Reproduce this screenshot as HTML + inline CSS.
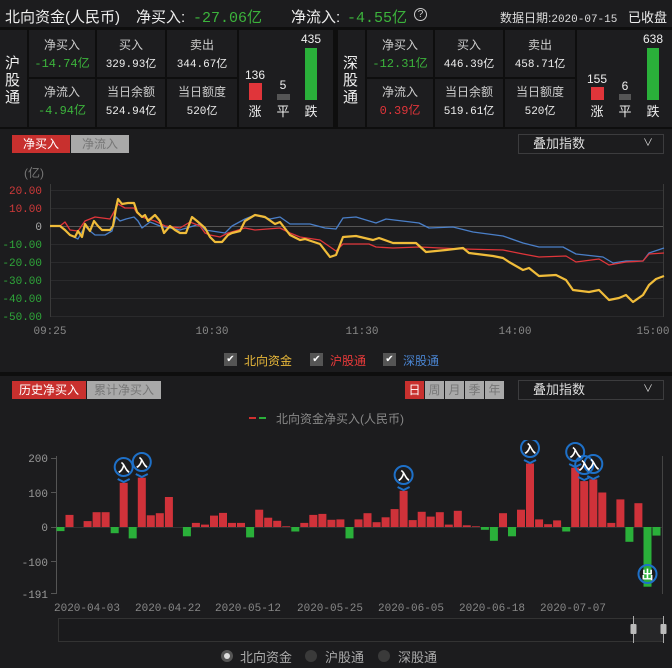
<!DOCTYPE html>
<html><head><meta charset="utf-8">
<style>
*{margin:0;padding:0;box-sizing:border-box}
body{width:672px;height:668px;background:#1c1c1e;font-family:"Liberation Sans","Noto Sans CJK SC",sans-serif;color:#ddd;position:relative;overflow:hidden}
.a{position:absolute;white-space:nowrap}
.c{position:absolute;text-align:center;white-space:nowrap}
.g{color:#3cb43c}.r{color:#e0353a}
.m{font-family:"Liberation Mono","Noto Sans CJK SC",monospace}
.v{font-size:11px}
</style></head><body>
<div class="a" style="left:0;top:0;width:672px;height:29px;background:#1c1c1e;border-bottom:2px solid #0e0e0e"></div>
<div class="a" style="left:5px;top:6px;font-size:15px;color:#eee">北向资金(人民币)</div>
<div class="a" style="left:136px;top:6px;font-size:15px;color:#eee">净买入:</div>
<div class="a g m" style="left:193px;top:6px;font-size:15px">-27.06亿</div>
<div class="a" style="left:291px;top:6px;font-size:15px;color:#eee">净流入:</div>
<div class="a g m" style="left:347px;top:6px;font-size:15px">-4.55亿</div>
<div class="a" style="left:414px;top:8px;width:13px;height:13px;border:1px solid #ccc;border-radius:50%;font-size:10px;text-align:center;line-height:11px;color:#ccc">?</div>
<div class="a" style="left:500px;top:9px;font-size:12px;color:#ddd">数据日期:<span class="m" style="font-size:11px">2020-07-15</span></div>
<div class="a" style="left:628px;top:7px;font-size:13px;color:#eee">已收盘</div>

<div class="a" style="left:0;top:29px;width:672px;height:100px;background:#0e0e0e"></div>
<svg class="a" style="left:0;top:29px" width="672" height="100">
<g fill="#1d1d1f">
<rect x="0" y="1" width="27" height="97"/>
<rect x="29" y="1" width="66" height="47"/><rect x="97" y="1" width="68" height="47"/><rect x="167" y="1" width="70" height="47"/>
<rect x="29" y="50" width="66" height="48"/><rect x="97" y="50" width="68" height="48"/><rect x="167" y="50" width="70" height="48"/>
<rect x="239" y="1" width="94" height="97"/>
<rect x="338" y="1" width="27" height="97"/>
<rect x="367" y="1" width="66" height="47"/><rect x="435" y="1" width="68" height="47"/><rect x="505" y="1" width="70" height="47"/>
<rect x="367" y="50" width="66" height="48"/><rect x="435" y="50" width="68" height="48"/><rect x="505" y="50" width="70" height="48"/>
<rect x="577" y="1" width="95" height="97"/>
</g>
<rect x="249" y="54" width="13" height="17" fill="#e0353a"/>
<rect x="277" y="65" width="13" height="6" fill="#555"/>
<rect x="305" y="19" width="12" height="52" fill="#2ab03a"/>
<rect x="591" y="58" width="13" height="13" fill="#e0353a"/>
<rect x="619" y="65" width="12" height="6" fill="#555"/>
<rect x="647" y="19" width="12" height="52" fill="#2ab03a"/>
</svg>
<div class="a" style="left:5px;top:55px;width:16px;font-size:15px;line-height:17px;color:#eee;white-space:normal">沪股通</div>
<div class="a" style="left:343px;top:55px;width:16px;font-size:15px;line-height:17px;color:#eee;white-space:normal">深股通</div>
<div style="font-size:12px">
<div class="c" style="left:29px;width:66px;top:36px;color:#ccc">净买入</div>
<div class="c g m" style="left:29px;width:66px;top:54px;font-size:12px">-14.74亿</div>
<div class="c" style="left:97px;width:68px;top:36px;color:#ccc">买入</div>
<div class="c m v" style="left:97px;width:68px;top:55px;color:#eee">329.93亿</div>
<div class="c" style="left:167px;width:70px;top:36px;color:#ccc">卖出</div>
<div class="c m v" style="left:167px;width:70px;top:55px;color:#eee">344.67亿</div>
<div class="c" style="left:29px;width:66px;top:83px;color:#ccc">净流入</div>
<div class="c g m" style="left:29px;width:66px;top:101px;font-size:12px">-4.94亿</div>
<div class="c" style="left:97px;width:68px;top:83px;color:#ccc">当日余额</div>
<div class="c m v" style="left:97px;width:68px;top:102px;color:#eee">524.94亿</div>
<div class="c" style="left:167px;width:70px;top:83px;color:#ccc">当日额度</div>
<div class="c m v" style="left:167px;width:70px;top:102px;color:#eee">520亿</div>
<div class="c" style="left:240px;width:30px;top:68px;color:#eee">136</div>
<div class="c" style="left:268px;width:30px;top:78px;color:#eee">5</div>
<div class="c" style="left:296px;width:30px;top:32px;color:#eee">435</div>
<div class="c" style="left:240px;width:30px;top:101px;color:#eee;font-size:13px">涨</div>
<div class="c" style="left:268px;width:30px;top:101px;color:#eee;font-size:13px">平</div>
<div class="c" style="left:296px;width:30px;top:101px;color:#eee;font-size:13px">跌</div>

<div class="c" style="left:367px;width:66px;top:36px;color:#ccc">净买入</div>
<div class="c g m" style="left:367px;width:66px;top:54px;font-size:12px">-12.31亿</div>
<div class="c" style="left:435px;width:68px;top:36px;color:#ccc">买入</div>
<div class="c m v" style="left:435px;width:68px;top:55px;color:#eee">446.39亿</div>
<div class="c" style="left:505px;width:70px;top:36px;color:#ccc">卖出</div>
<div class="c m v" style="left:505px;width:70px;top:55px;color:#eee">458.71亿</div>
<div class="c" style="left:367px;width:66px;top:83px;color:#ccc">净流入</div>
<div class="c r m" style="left:367px;width:66px;top:101px;font-size:12px">0.39亿</div>
<div class="c" style="left:435px;width:68px;top:83px;color:#ccc">当日余额</div>
<div class="c m v" style="left:435px;width:68px;top:102px;color:#eee">519.61亿</div>
<div class="c" style="left:505px;width:70px;top:83px;color:#ccc">当日额度</div>
<div class="c m v" style="left:505px;width:70px;top:102px;color:#eee">520亿</div>
<div class="c" style="left:582px;width:30px;top:72px;color:#eee">155</div>
<div class="c" style="left:610px;width:30px;top:79px;color:#eee">6</div>
<div class="c" style="left:638px;width:30px;top:32px;color:#eee">638</div>
<div class="c" style="left:582px;width:30px;top:101px;color:#eee;font-size:13px">涨</div>
<div class="c" style="left:610px;width:30px;top:101px;color:#eee;font-size:13px">平</div>
<div class="c" style="left:638px;width:30px;top:101px;color:#eee;font-size:13px">跌</div>
</div>

<div class="c" style="left:12px;top:135px;width:58px;height:18px;background:#c8302e;color:#fff;font-size:12px;line-height:18px">净买入</div>
<div class="c" style="left:71px;top:135px;width:58px;height:18px;background:#a9a9a9;color:#777;font-size:12px;line-height:18px">净流入</div>
<div class="a" style="left:518px;top:134px;width:146px;height:20px;border:1px solid #3c3c3e;font-size:13px;line-height:18px;color:#ddd;padding-left:14px">叠加指数<span style="position:absolute;right:10px;top:0;font-size:10px">∨</span></div>
<div class="a" style="left:24px;top:164px;font-size:12px;color:#777">(亿)</div>
<svg class="a" style="left:0;top:180px" width="672" height="160">
<g font-family="Liberation Mono, monospace" font-size="11" text-anchor="end">
<text x="42" y="14" fill="#d23a3a">20.00</text>
<text x="42" y="32" fill="#d23a3a">10.00</text>
<text x="42" y="50" fill="#aaa">0</text>
<text x="42" y="68" fill="#2fa83a">-10.00</text>
<text x="42" y="86" fill="#2fa83a">-20.00</text>
<text x="42" y="104" fill="#2fa83a">-30.00</text>
<text x="42" y="122" fill="#2fa83a">-40.00</text>
<text x="42" y="140" fill="#2fa83a">-50.00</text>
</g>
<g stroke="#2a2a2c" stroke-width="1">
<line x1="50" y1="10.5" x2="664" y2="10.5"/><line x1="50" y1="28.5" x2="664" y2="28.5"/>
<line x1="50" y1="64.5" x2="664" y2="64.5"/><line x1="50" y1="82.5" x2="664" y2="82.5"/>
<line x1="50" y1="100.5" x2="664" y2="100.5"/><line x1="50" y1="118.5" x2="664" y2="118.5"/>
<line x1="50" y1="136.5" x2="664" y2="136.5"/>
</g>
<line x1="50" y1="46.5" x2="664" y2="46.5" stroke="#555"/>
<line x1="50.5" y1="4" x2="50.5" y2="137" stroke="#3a3a3a"/>
<line x1="663.5" y1="4" x2="663.5" y2="137" stroke="#3a3a3a"/>
<g fill="none" stroke-linejoin="round" transform="translate(0,-180)">
<polyline stroke="#4a7fc8" stroke-width="1.3" points="50,226 60,226 70,235 78,239 85,226 90,231 95,235 105,235 112,231 116,217 120,221 126,219 134,217 138,221 142,228 150,222 160,226 180,230 200,224 205,230 225,233 232,226 245,219 255,215 270,219 280,217 290,224 310,224 325,228 336,229 343,218 356,217 376,223 386,219 419,223 429,228 453,227 473,232 503,236 523,243 539,247 563,247 576,254 603,257 613,263 626,261 643,261 649,253 664,248"/>
<polyline stroke="#e0353a" stroke-width="1.3" points="50,226 60,226 65,222 70,230 78,231 85,221 95,217 110,219 115,210 118,204 125,208 134,208 137,213 142,217 148,219 155,221 165,226 180,228 190,222 200,226 205,233 210,235 220,237 228,233 235,231 245,228 255,230 280,228 290,233 300,237 320,240 336,251 343,244 369,244 376,247 393,248 419,247 463,249 503,250 523,254 539,257 566,256 576,262 599,259 609,265 626,262 643,261 649,254 664,253"/>
<polyline stroke="#f0bc3a" stroke-width="2.2" points="50,226 60,226 65,230 70,235 75,237 78,231 82,237 85,224 90,231 94,221 98,226 102,230 110,230 113,226 116,208 118,199 122,204 128,203 134,203 137,212 142,217 145,215 148,221 155,215 160,221 164,233 170,226 175,230 180,233 186,233 192,217 197,221 205,228 210,237 215,242 222,242 228,235 232,233 240,231 245,221 255,215 265,217 275,224 280,222 290,235 300,240 305,239 320,244 330,257 336,255 343,237 356,236 373,240 379,238 393,243 416,243 426,252 446,250 463,248 469,253 493,256 503,258 509,262 523,270 529,268 539,276 556,275 566,280 573,290 589,292 599,290 609,300 619,298 626,295 633,302 643,295 649,285 656,279 664,276"/>
</g>
<g font-family="Liberation Mono, monospace" font-size="11" fill="#888" text-anchor="middle">
<text x="50" y="154">09:25</text><text x="212" y="154">10:30</text><text x="362" y="154">11:30</text><text x="515" y="154">14:00</text><text x="653" y="154">15:00</text>
</g>
</svg>
<div style="font-size:12px">
<div class="a" style="left:224px;top:353px;width:13px;height:13px;background:#555;color:#fff;font-size:10px;text-align:center;line-height:13px">✔</div>
<div class="a" style="left:244px;top:352px;color:#e8b83a">北向资金</div>
<div class="a" style="left:310px;top:353px;width:13px;height:13px;background:#555;color:#fff;font-size:10px;text-align:center;line-height:13px">✔</div>
<div class="a" style="left:330px;top:352px;color:#e83a3a">沪股通</div>
<div class="a" style="left:383px;top:353px;width:13px;height:13px;background:#555;color:#fff;font-size:10px;text-align:center;line-height:13px">✔</div>
<div class="a" style="left:403px;top:352px;color:#4a84d0">深股通</div>
</div>
<div class="a" style="left:0;top:372px;width:672px;height:4px;background:#0e0e0e"></div>

<div class="c" style="left:12px;top:381px;width:74px;height:18px;background:#c8302e;color:#fff;font-size:12px;line-height:18px">历史净买入</div>
<div class="c" style="left:87px;top:381px;width:74px;height:18px;background:#a9a9a9;color:#777;font-size:12px;line-height:18px">累计净买入</div>
<div class="c" style="left:405px;top:381px;width:19px;height:18px;background:#c8302e;color:#fff;font-size:12px;line-height:18px">日</div>
<div class="c" style="left:425px;top:381px;width:19px;height:18px;background:#a9a9a9;color:#777;font-size:12px;line-height:18px">周</div>
<div class="c" style="left:445px;top:381px;width:19px;height:18px;background:#a9a9a9;color:#777;font-size:12px;line-height:18px">月</div>
<div class="c" style="left:465px;top:381px;width:19px;height:18px;background:#a9a9a9;color:#777;font-size:12px;line-height:18px">季</div>
<div class="c" style="left:485px;top:381px;width:19px;height:18px;background:#a9a9a9;color:#777;font-size:12px;line-height:18px">年</div>
<div class="a" style="left:518px;top:380px;width:146px;height:20px;border:1px solid #3c3c3e;font-size:13px;line-height:18px;color:#ddd;padding-left:14px">叠加指数<span style="position:absolute;right:10px;top:0;font-size:10px">∨</span></div>
<div class="a" style="left:249px;top:417px;width:7px;height:2px;background:#d03030"></div>
<div class="a" style="left:259px;top:417px;width:7px;height:2px;background:#2ab03a"></div>
<div class="a" style="left:276px;top:410px;font-size:12px;color:#888">北向资金净买入(人民币)</div>

<svg class="a" style="left:0;top:440px" width="672" height="228">
<g transform="translate(0,-440)">
<g font-family="Liberation Mono, monospace" font-size="11" fill="#999" text-anchor="end">
<text x="48" y="462">200</text><text x="48" y="497">100</text><text x="48" y="531">0</text><text x="48" y="566">-100</text><text x="48" y="598">-191</text>
</g>
<g stroke="#555"><line x1="56.5" y1="456" x2="56.5" y2="594"/><line x1="51" y1="458.5" x2="57" y2="458.5"/><line x1="51" y1="492.5" x2="57" y2="492.5"/><line x1="51" y1="527.5" x2="57" y2="527.5"/><line x1="51" y1="561.5" x2="57" y2="561.5"/><line x1="51" y1="593.5" x2="57" y2="593.5"/></g>
<line x1="57" y1="527.5" x2="662" y2="527.5" stroke="#333"/>
<line x1="662.5" y1="456" x2="662.5" y2="594" stroke="#444"/>
<g fill="#d0323a">
<rect x="65.5" y="514.9" width="8" height="12.1"/><rect x="83.6" y="521.1" width="8" height="5.9"/><rect x="92.6" y="512.2" width="8" height="14.8"/><rect x="101.6" y="512.2" width="8" height="14.8"/>
<rect x="119.7" y="482.8" width="8" height="44.2"/><rect x="137.8" y="477.7" width="8" height="49.3"/><rect x="146.8" y="515.3" width="8" height="11.7"/><rect x="155.8" y="513.2" width="8" height="13.8"/><rect x="164.9" y="497" width="8" height="30"/>
<rect x="191.9" y="522.9" width="8" height="4.1"/><rect x="201" y="524.6" width="8" height="2.4"/><rect x="210" y="515.6" width="8" height="11.4"/><rect x="219" y="512.9" width="8" height="14.1"/><rect x="228" y="522.9" width="8" height="4.1"/><rect x="237" y="522.9" width="8" height="4.1"/>
<rect x="255.2" y="509.7" width="8" height="17.3"/><rect x="264.2" y="517.7" width="8" height="9.3"/><rect x="273.2" y="520.8" width="8" height="6.2"/><rect x="282.2" y="526.3" width="8" height="0.7"/>
<rect x="300.3" y="522.9" width="8" height="4.1"/><rect x="309.3" y="514.9" width="8" height="12.1"/><rect x="318.4" y="513.9" width="8" height="13.1"/><rect x="327.4" y="519.8" width="8" height="7.2"/><rect x="336.4" y="519.4" width="8" height="7.6"/>
<rect x="354.5" y="519.4" width="8" height="7.6"/><rect x="363.5" y="513.2" width="8" height="13.8"/><rect x="372.6" y="522.2" width="8" height="4.8"/><rect x="381.6" y="517.3" width="8" height="9.7"/><rect x="390.6" y="509.1" width="8" height="17.9"/><rect x="399.6" y="490.8" width="8" height="36.2"/><rect x="408.7" y="520.1" width="8" height="6.9"/><rect x="417.7" y="511.8" width="8" height="15.2"/><rect x="426.7" y="516.6" width="8" height="10.4"/><rect x="435.8" y="512.2" width="8" height="14.8"/><rect x="444.8" y="524.6" width="8" height="2.4"/><rect x="453.8" y="510.8" width="8" height="16.2"/><rect x="462.8" y="525.3" width="8" height="1.7"/><rect x="471.9" y="526.3" width="8" height="0.7"/>
<rect x="499" y="513.2" width="8" height="13.8"/><rect x="517" y="509.7" width="8" height="17.3"/><rect x="526" y="463.5" width="8" height="63.5"/><rect x="535.1" y="519.4" width="8" height="7.6"/><rect x="544.1" y="524.2" width="8" height="2.8"/><rect x="553.1" y="520.4" width="8" height="6.6"/>
<rect x="571.2" y="467.7" width="8" height="59.3"/><rect x="580.2" y="481.1" width="8" height="45.9"/><rect x="589.3" y="479.4" width="8" height="47.6"/><rect x="598.3" y="492.5" width="8" height="34.5"/><rect x="607.3" y="522.9" width="8" height="4.1"/><rect x="616.4" y="499.4" width="8" height="27.6"/><rect x="634.4" y="503.2" width="8" height="23.8"/>
</g>
<g fill="#2ab03a">
<rect x="56.5" y="527" width="8" height="4.1"/><rect x="110.7" y="527" width="8" height="6.2"/><rect x="128.7" y="527" width="8" height="11.4"/><rect x="182.9" y="527" width="8" height="9.3"/><rect x="246.1" y="527" width="8" height="10.4"/><rect x="291.3" y="527" width="8" height="4.5"/><rect x="345.5" y="527" width="8" height="11.4"/><rect x="480.9" y="527" width="8" height="2.8"/><rect x="489.9" y="527" width="8" height="13.8"/><rect x="508" y="527" width="8" height="9.3"/><rect x="562.2" y="527" width="8" height="4.5"/><rect x="625.4" y="527" width="8" height="14.8"/><rect x="643.5" y="527" width="8" height="59.7"/><rect x="652.5" y="527" width="8" height="8.6"/>
</g>
<g font-family="Liberation Sans, Noto Sans CJK SC, sans-serif" font-size="12" font-weight="bold" fill="#fff" text-anchor="middle">
<g stroke="#1e70c8" stroke-width="2" fill="none">
<path d="M117.7,479 l6,3 l6,-3"/><circle cx="123.7" cy="467" r="9"/>
<path d="M135.8,474 l6,3 l6,-3"/><circle cx="141.8" cy="462" r="9"/>
<path d="M397.6,487 l6,3 l6,-3"/><circle cx="403.6" cy="475" r="9"/>
<path d="M524,460 l6,3 l6,-3"/><circle cx="530" cy="448" r="9"/>
<path d="M569.2,464 l6,3 l6,-3"/><circle cx="575.2" cy="452" r="9"/>
<path d="M578.2,477 l6,3 l6,-3"/><circle cx="584.2" cy="465" r="9"/>
<path d="M587.3,476 l6,3 l6,-3"/><circle cx="593.3" cy="464" r="9"/>
<circle cx="647.5" cy="574" r="9"/>
</g>
<text x="123.7" y="472">入</text><text x="141.8" y="467">入</text><text x="403.6" y="480">入</text><text x="530" y="453">入</text><text x="575.2" y="457">入</text><text x="584.2" y="470">入</text><text x="593.3" y="469">入</text><text x="647.5" y="579">出</text>
</g>
<g font-family="Liberation Mono, monospace" font-size="11" fill="#888">
<text x="54" y="611">2020-04-03</text><text x="135" y="611">2020-04-22</text><text x="215" y="611">2020-05-12</text><text x="297" y="611">2020-05-25</text><text x="378" y="611">2020-06-05</text><text x="459" y="611">2020-06-18</text><text x="540" y="611">2020-07-07</text>
</g>
<rect x="58.5" y="618.5" width="605" height="23" fill="#1a1a1c" stroke="#333"/>
<rect x="633" y="619" width="30" height="22" fill="#262628"/>
<line x1="633.5" y1="616" x2="633.5" y2="643" stroke="#aaa"/><rect x="630.5" y="624" width="6" height="10" fill="#bbb" rx="1"/>
<line x1="663.5" y1="616" x2="663.5" y2="643" stroke="#aaa"/><rect x="660.5" y="624" width="6" height="10" fill="#bbb" rx="1"/>
</g>
</svg>
<div class="a" style="left:221px;top:650px;width:12px;height:12px;border-radius:50%;background:#555"></div>
<div class="a" style="left:224px;top:653px;width:6px;height:6px;border-radius:50%;background:#ddd"></div>
<div class="a" style="left:240px;top:647px;font-size:13px;color:#aaa">北向资金</div>
<div class="a" style="left:305px;top:650px;width:12px;height:12px;border-radius:50%;background:#3a3a3a"></div>
<div class="a" style="left:325px;top:647px;font-size:13px;color:#aaa">沪股通</div>
<div class="a" style="left:378px;top:650px;width:12px;height:12px;border-radius:50%;background:#3a3a3a"></div>
<div class="a" style="left:398px;top:647px;font-size:13px;color:#aaa">深股通</div>
</body></html>
